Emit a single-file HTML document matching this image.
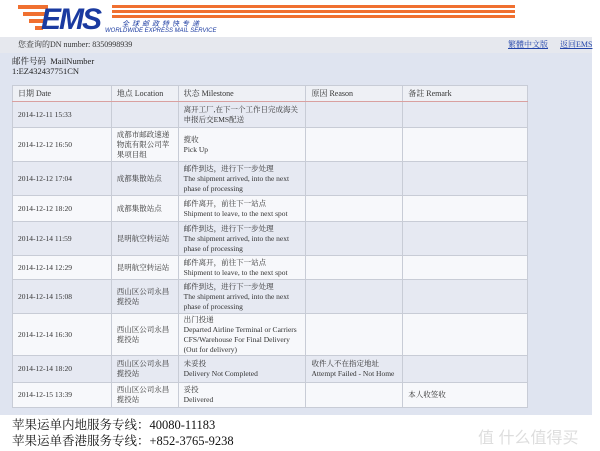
<!DOCTYPE html><html><head><meta charset="utf-8"><style>
body{margin:0;width:600px;height:451px;background:#fff;font-family:"Liberation Serif","Noto Serif CJK SC",serif;position:relative;overflow:hidden;color:#333}
.abs{position:absolute;white-space:nowrap}
.bg{left:0;top:37px;width:592px;height:378px;background:#dfe4f0}
.bar{left:0;top:37px;width:592px;height:16px;background:#e6e8ee;font-size:8px;line-height:16px}
table{position:absolute;left:12px;top:85px;width:516px;border-collapse:collapse;font-size:7.5px;line-height:10px}
td{border:1px solid #c8ccd6;padding:0 5px;vertical-align:middle}
tr.h td{background:#eef0f5;height:15px;font-size:8px;border-bottom:1px solid #d9a0a0}
tr.o td{background:#e6e9f2}
tr.e td{background:#f7f8fb}
</style></head><body>
<div class="abs" style="left:18px;top:5px;width:30px;height:4px;background:#f07030"></div>
<div class="abs" style="left:23px;top:12px;width:24px;height:4px;background:#f07030"></div>
<div class="abs" style="left:29px;top:19px;width:16px;height:4px;background:#f07030"></div>
<div class="abs" style="left:35px;top:26px;width:8px;height:4px;background:#f07030"></div>
<div class="abs" style="left:41px;top:3px;font:italic bold 30px 'Liberation Sans',sans-serif;color:#1a3aa0;letter-spacing:-2px">EMS</div>
<div class="abs" style="left:112px;top:5px;width:403px;height:3px;background:#f07030"></div>
<div class="abs" style="left:112px;top:10px;width:403px;height:3px;background:#f07030"></div>
<div class="abs" style="left:112px;top:15px;width:403px;height:3px;background:#f07030"></div>
<div class="abs" style="left:122px;top:19px;font:italic 7px 'Liberation Sans','Noto Sans CJK SC',sans-serif;color:#1a3aa0;letter-spacing:3px">全球邮政特快专递</div>
<div class="abs" style="left:105px;top:28px;font:italic 6px 'Liberation Sans',sans-serif;color:#1a3aa0">WORLDWIDE EXPRESS MAIL SERVICE</div>
<div class="abs bg"></div>
<div class="abs bar"><span style="margin-left:18px">您查询的DN number: 8350998939</span><span style="position:absolute;left:508px;color:#2244aa;text-decoration:underline">繁體中文版</span><span style="position:absolute;left:560px;color:#2244aa;text-decoration:underline">返回EMS</span></div>
<div class="abs" style="left:12px;top:56px;font-size:8.5px;line-height:10px;color:#222">邮件号码&nbsp; MailNumber<br>1:EZ432437751CN</div>
<table>
<colgroup><col style="width:99px"><col style="width:67px"><col style="width:128px"><col style="width:97px"><col style="width:125px"></colgroup>
<tr class="h"><td>日期 Date</td><td>地点 Location</td><td>状态 Milestone</td><td>原因 Reason</td><td>备註 Remark</td></tr>
<tr class="o" style="height:26px"><td>2014-12-11 15:33</td><td></td><td>离开工厂,在下一个工作日完成海关申报后交EMS配送</td><td></td><td></td></tr>
<tr class="e" style="height:34px"><td>2014-12-12 16:50</td><td>成都市邮政速递物流有限公司苹果项目组</td><td>揽收<br>Pick Up</td><td></td><td></td></tr>
<tr class="o" style="height:34px"><td>2014-12-12 17:04</td><td>成都集散站点</td><td>邮件到达，进行下一步处理<br>The shipment arrived, into the next phase of processing</td><td></td><td></td></tr>
<tr class="e" style="height:26px"><td>2014-12-12 18:20</td><td>成都集散站点</td><td>邮件离开，前往下一站点<br>Shipment to leave, to the next spot</td><td></td><td></td></tr>
<tr class="o" style="height:34px"><td>2014-12-14 11:59</td><td>昆明航空转运站</td><td>邮件到达，进行下一步处理<br>The shipment arrived, into the next phase of processing</td><td></td><td></td></tr>
<tr class="e" style="height:24px"><td>2014-12-14 12:29</td><td>昆明航空转运站</td><td>邮件离开，前往下一站点<br>Shipment to leave, to the next spot</td><td></td><td></td></tr>
<tr class="o" style="height:34px"><td>2014-12-14 15:08</td><td>西山区公司永昌揽投站</td><td>邮件到达，进行下一步处理<br>The shipment arrived, into the next phase of processing</td><td></td><td></td></tr>
<tr class="e" style="height:42px"><td>2014-12-14 16:30</td><td>西山区公司永昌揽投站</td><td>出门投递<br>Departed Airline Terminal or Carriers CFS/Warehouse For Final Delivery (Out for delivery)</td><td></td><td></td></tr>
<tr class="o" style="height:27px"><td>2014-12-14 18:20</td><td>西山区公司永昌揽投站</td><td>未妥投<br>Delivery Not Completed</td><td>收件人不在指定地址<br>Attempt Failed - Not Home</td><td></td></tr>
<tr class="e" style="height:25px"><td>2014-12-15 13:39</td><td>西山区公司永昌揽投站</td><td>妥投<br>Delivered</td><td></td><td>本人收签收</td></tr>
</table>
<div class="abs" style="left:12px;top:417px;font-size:12.5px;line-height:16px;color:#111">苹果运单内地服务专线：40080-11183<br>苹果运单香港服务专线：+852-3765-9238</div>
<div class="abs" style="left:478px;top:424px;font:16px 'Liberation Sans','Noto Sans CJK SC',sans-serif;color:#ddd">值 什么值得买</div>
</body></html>
